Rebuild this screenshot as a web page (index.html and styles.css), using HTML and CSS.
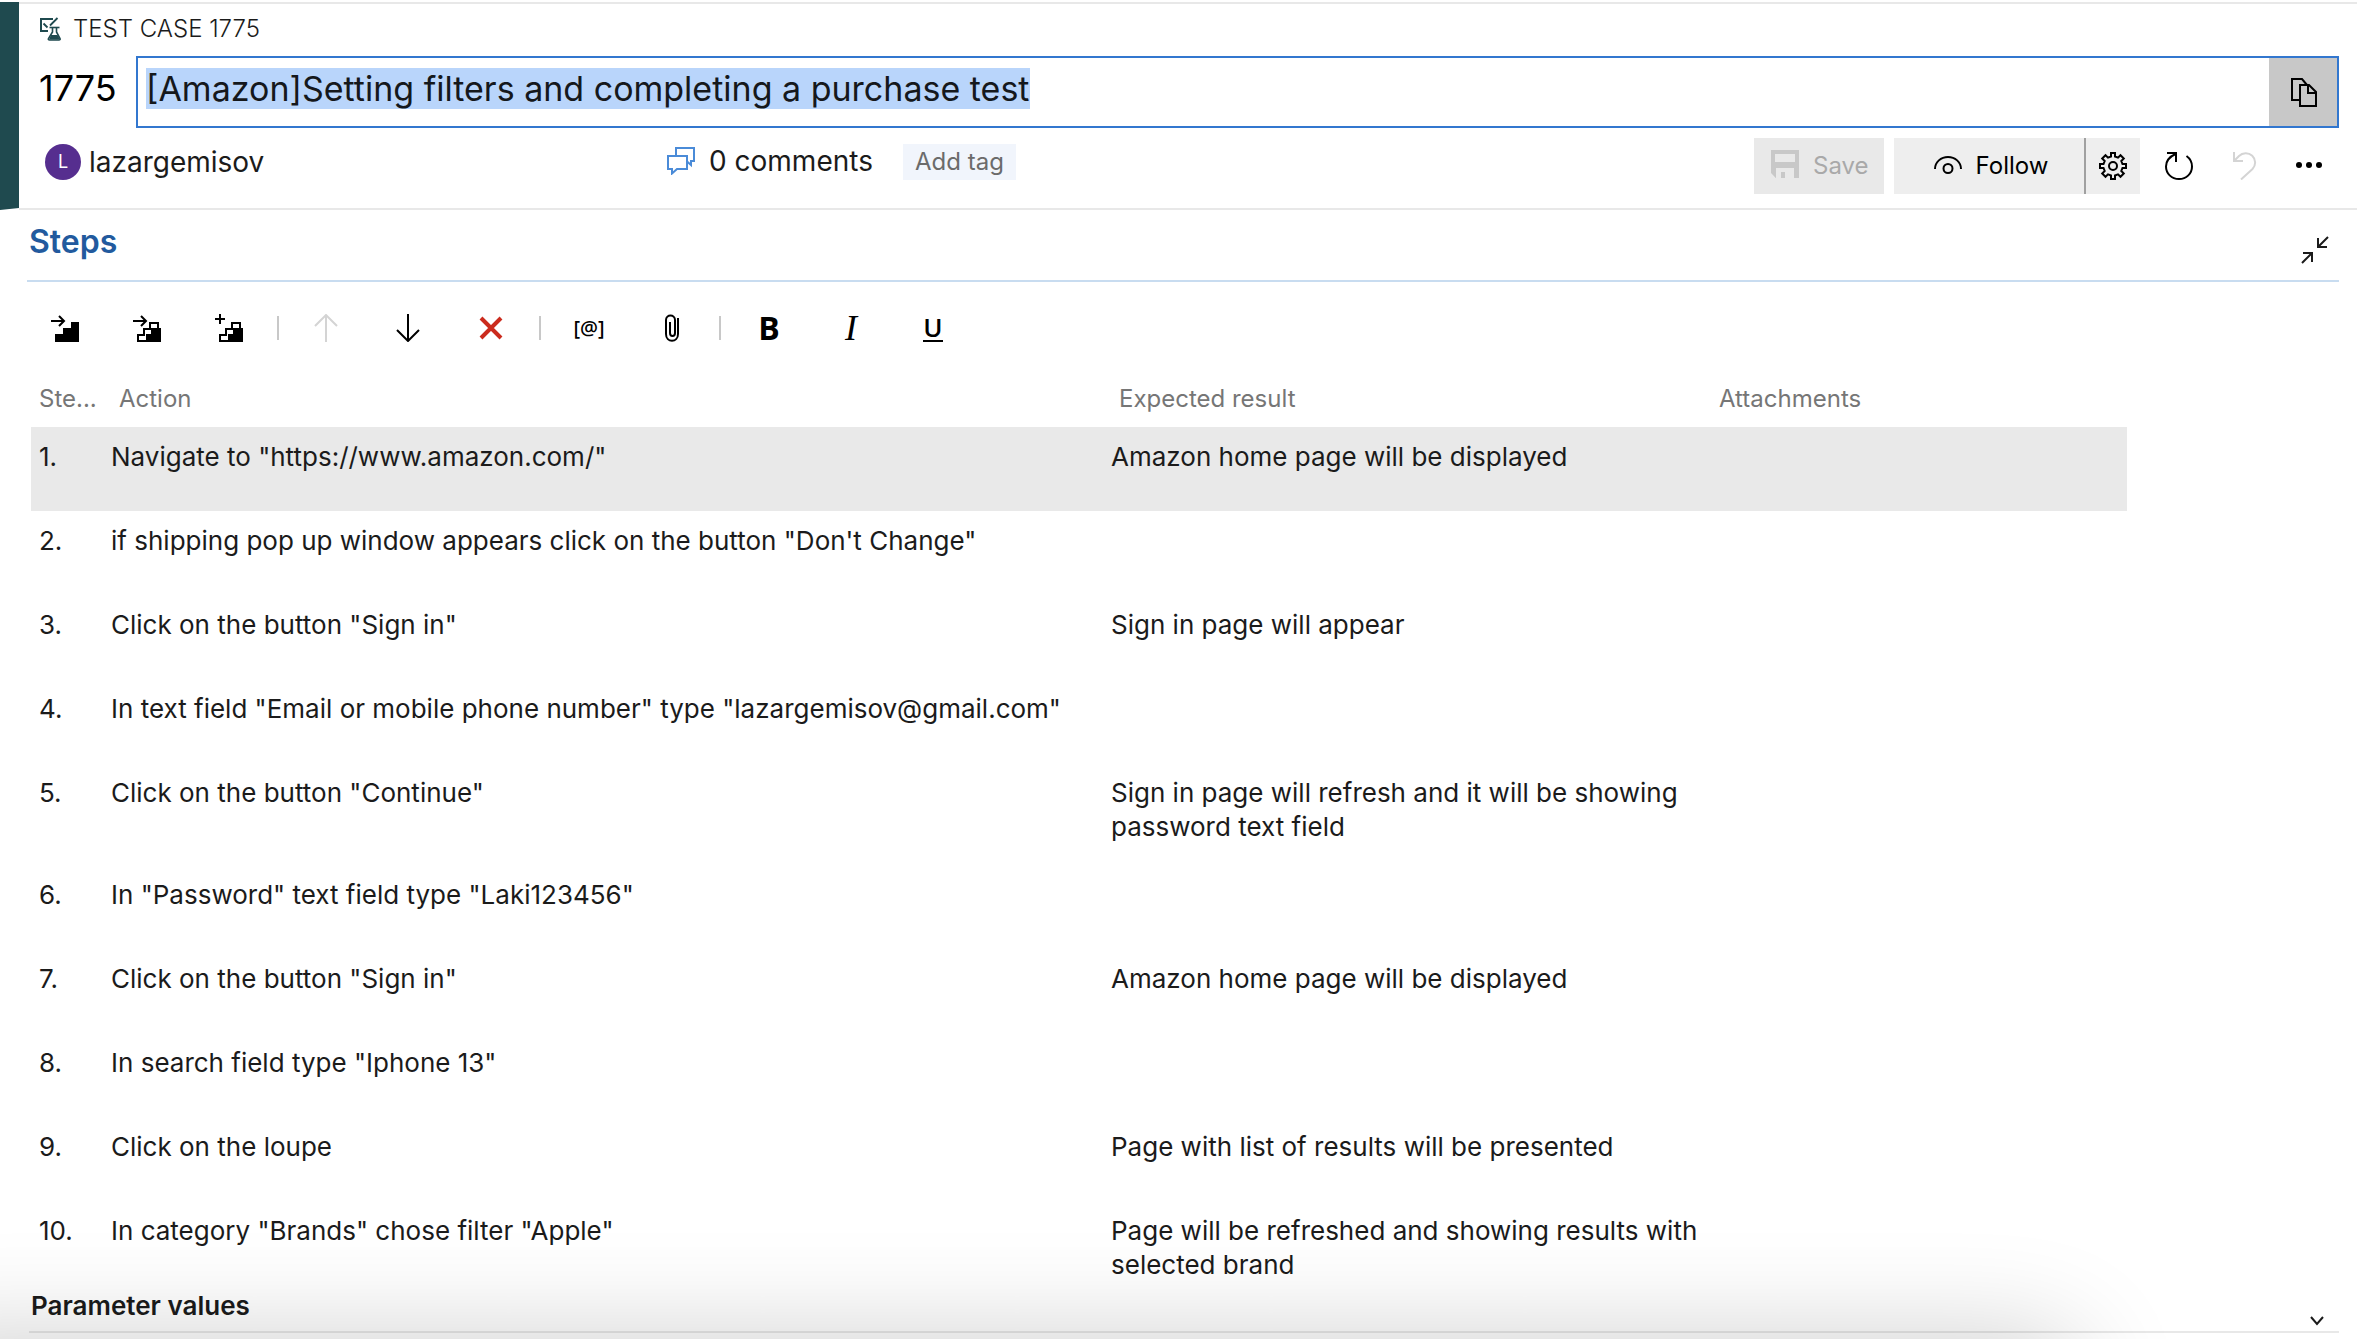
FILE: index.html
```html
<!DOCTYPE html>
<html lang="en">
<head>
<meta charset="utf-8">
<title>Test Case 1775</title>
<link rel="stylesheet" href="styles.css">
</head>
<body>
<header class="item-header">
  <svg class="type-bar" viewBox="0 0 19 208" preserveAspectRatio="none" aria-hidden="true"><path d="M0 0H19V206L0 208Z" fill="#1f4a4f"/></svg>
  <div class="header-body">
    <div class="type-row">
      <svg width="22" height="24" viewBox="0 0 22 24" fill="none" stroke="#1f4a4f" stroke-width="2" aria-hidden="true"><path d="M14 2H2V14H9"/><path d="M4.500 6.500L8.500 10.500M11 8.500L18.500 1" stroke-width="1.800"/><path d="M10.500 10.500H20.500" stroke-width="1.600"/><path d="M13.500 11V15L9.500 21.500Q9 23 10.500 23H20Q21.500 23 21 21.500L17.500 15V11" stroke-width="1.600"/><path d="M12 18H18.500L21 22.500H10Z" fill="#1f4a4f" stroke="none"/></svg>
      <span>TEST CASE 1775</span>
    </div>
    <div class="title-row">
      <label class="item-id" for="title">1775</label>
      <div class="title-box">
        <input id="title" class="title-input" type="text" value="[Amazon]Setting filters and completing a purchase test">
        <button class="copy-button" type="button" aria-label="Copy to clipboard">
          <svg width="28" height="30" viewBox="0 0 28 30" fill="none" stroke="#000" stroke-width="2"><path d="M10 23H2V2H12L17 8"/><path d="M10 8H19L26 15V29H10Z"/><path d="M18 8V16H26"/></svg>
        </button>
      </div>
    </div>
    <div class="meta-row">
      <div class="assignee"><span class="avatar">L</span><span>lazargemisov</span></div>
      <a class="comments" href="#comments">
        <svg width="28" height="28" viewBox="0 0 28 28" fill="none" stroke="#4a8bd8" stroke-width="2" aria-hidden="true"><path d="M9 9V1H27V14H24V18L19.500 14"/><path d="M1 9H20V22H10L5 26.500V22H1Z"/></svg>
        <span>0 comments</span>
      </a>
      <button class="add-tag" type="button">Add tag</button>
      <div class="actions">
        <button class="save" type="button" disabled>
          <svg width="28" height="28" viewBox="0 0 28 28" aria-hidden="true"><path fill="#c8c8c8" fill-rule="evenodd" d="M0 0H28V28H23V18H5V28L0 23ZM4 4V12H24V4Z"/><path fill="#c8c8c8" d="M10 22H14V28H10ZM1 23H5V28Z"/></svg>
          <span>Save</span>
        </button>
        <button class="follow" type="button">
          <svg width="28" height="20" viewBox="0 0 28 20" fill="none" stroke="#000" stroke-width="2" aria-hidden="true"><path d="M1 13C1 6 7 1 14 1S27 6 27 13"/><circle cx="14" cy="12.500" r="4.500"/></svg>
          <span>Follow</span>
        </button>
        <button class="gear" type="button" aria-label="Follow settings">
          <svg width="28" height="28" viewBox="0 0 28 28" fill="none" stroke="#000" stroke-width="2"><path d="M12 1H16V4.500L19 5.700L21.500 3.200L24.800 6.500L22.300 9L23.500 12H27V16H23.500L22.300 19L24.800 21.500L21.500 24.800L19 22.300L16 23.500V27H12V23.500L9 22.300L6.500 24.800L3.200 21.500L5.700 19L4.500 16H1V12H4.500L5.700 9L3.200 6.500L6.500 3.200L9 5.700L12 4.500Z"/><circle cx="14" cy="14" r="4"/></svg>
        </button>
        <button class="bare" type="button" aria-label="Refresh">
          <svg width="28" height="28" viewBox="0 0 28 28" fill="none" stroke="#000" stroke-width="2"><path d="M2 1H11V10"/><path d="M10.500 2C4 5 1 9.500 1 14.500C1 21.500 6.500 27 14 27S27 21.500 27 14.500C27 10 25 6.500 21.500 4"/></svg>
        </button>
        <button class="bare" type="button" aria-label="Undo" disabled>
          <svg width="28" height="28" viewBox="0 0 28 28" fill="none" stroke="#d4d4d4" stroke-width="2"><path d="M4 0V9H13"/><path d="M4 9L9 4A9.300 9.300 0 0 1 22.500 17L11 27.500"/></svg>
        </button>
        <button class="bare" type="button" aria-label="More actions">
          <svg width="28" height="28" viewBox="0 0 28 28"><circle cx="4" cy="13" r="3"/><circle cx="14" cy="13" r="3"/><circle cx="24" cy="13" r="3"/></svg>
        </button>
      </div>
    </div>
  </div>
</header>
<main class="steps">
  <div class="section-head">
    <h2>Steps</h2>
    <button class="collapse" type="button" aria-label="Exit full screen">
      <svg width="28" height="28" viewBox="0 0 28 28" fill="none" stroke="#1b1b1b" stroke-width="2"><path d="M27 1L17 11M17 2V11H26"/><path d="M1 27L11 17M2 17H11V26"/></svg>
    </button>
  </div>
  <div class="toolbar" role="toolbar" aria-label="Step editing">
    <button type="button" aria-label="Insert step"><svg width="28" height="28" viewBox="0 0 28 28"><path d="M4 28V20H12V14H20V8H28V28Z"/><path d="M0 7H13M8 2L13 7L8 12" fill="none" stroke="#000" stroke-width="2"/></svg></button>
    <button type="button" aria-label="Insert shared steps"><svg width="28" height="28" viewBox="0 0 28 28"><path d="M14 28V20H20V14H28V28Z"/><path d="M5 27V21H11V15H17V9H25V15H19V21H14V27ZM0 7H13M8 2L13 7L8 12" fill="none" stroke="#000" stroke-width="2"/></svg></button>
    <button type="button" aria-label="Create shared steps"><svg width="28" height="28" viewBox="0 0 28 28"><path d="M14 28V20H20V14H28V28Z"/><path d="M5 27V21H11V15H17V9H25V15H19V21H14V27ZM0 5H10M5 0V10" fill="none" stroke="#000" stroke-width="2"/></svg></button>
    <span class="separator"></span>
    <button type="button" aria-label="Move up" disabled><svg width="28" height="28" viewBox="0 0 28 28" fill="none" stroke="#d4d4d4" stroke-width="2"><path d="M13 28V1M2 12L13 1L24 12"/></svg></button>
    <button type="button" aria-label="Move down"><svg width="28" height="28" viewBox="0 0 28 28" fill="none" stroke="#000" stroke-width="2"><path d="M13 0V27M2 16L13 27L24 16"/></svg></button>
    <button type="button" aria-label="Delete step"><svg width="28" height="28" viewBox="0 0 28 28" fill="none" stroke="#cb2b1d" stroke-width="4"><path d="M4 4L24 24M24 4L4 24"/></svg></button>
    <span class="separator"></span>
    <button class="glyph-param" type="button" aria-label="Insert parameter">[@]</button>
    <button type="button" aria-label="Add attachment"><svg width="28" height="28" viewBox="0 0 28 28" fill="none" stroke="#000" stroke-width="2"><path d="M21 4V20C21 29 9 29 9 20V6C9 0 18 0 18 6V19C18 23 13 23 13 19V8"/></svg></button>
    <span class="separator"></span>
    <button class="glyph-bold" type="button" aria-label="Bold">B</button>
    <button class="glyph-italic" type="button" aria-label="Italic">I</button>
    <button class="glyph-underline" type="button" aria-label="Underline"><span>U</span></button>
  </div>
  <div class="grid">
    <table>
      <colgroup><col class="col-step"><col class="col-action"><col class="col-result"><col></colgroup>
      <thead><tr><th class="step-head" scope="col">Ste...</th><th scope="col">Action</th><th scope="col">Expected result</th><th scope="col">Attachments</th></tr></thead>
      <tbody>
        <tr class="selected"><td>1.</td><td>Navigate to "https://www.amazon.com/"</td><td>Amazon home page will be displayed</td><td></td></tr>
        <tr><td>2.</td><td>if shipping pop up window appears click on the button "Don't Change"</td><td></td><td></td></tr>
        <tr><td>3.</td><td>Click on the button "Sign in"</td><td>Sign in page will appear</td><td></td></tr>
        <tr><td>4.</td><td>In text field "Email or mobile phone number" type "lazargemisov@gmail.com"</td><td></td><td></td></tr>
        <tr><td>5.</td><td>Click on the button "Continue"</td><td>Sign in page will refresh and it will be showing password text field</td><td></td></tr>
        <tr><td>6.</td><td>In "Password" text field type "Laki123456"</td><td></td><td></td></tr>
        <tr><td>7.</td><td>Click on the button "Sign in"</td><td>Amazon home page will be displayed</td><td></td></tr>
        <tr><td>8.</td><td>In search field type "Iphone 13"</td><td></td><td></td></tr>
        <tr><td>9.</td><td>Click on the loupe</td><td>Page with list of results will be presented</td><td></td></tr>
        <tr><td>10.</td><td>In category "Brands" chose filter "Apple"</td><td>Page will be refreshed and showing results with selected brand</td><td></td></tr>
      </tbody>
    </table>
  </div>
</main>
<section class="parameters">
  <h3>Parameter values</h3>
  <button class="expand" type="button" aria-label="Expand parameter values">
    <svg width="14" height="10" viewBox="0 0 14 10" fill="none" stroke="#1b1b1b" stroke-width="2"><path d="M1 1L7 8L13 1"/></svg>
  </button>
</section>
<div class="bottom-shadow"></div>
<script src="script.js"></script>
</body>
</html>
```
FILE: styles.css
```css
* {
  box-sizing: border-box;
}

body {
  margin: 0;
  padding-top: 2px;
  min-height: 100vh;
  display: flex;
  flex-direction: column;
  position: relative;
  background: #fff;
  color: #1b1b1b;
  font-family: Inter, "Liberation Sans", sans-serif;
  font-size: 26px;
  line-height: 34px;
}

button,
input {
  font: inherit;
  color: inherit;
  margin: 0;
  padding: 0;
  border: 0;
  border-radius: 0;
  background: none;
}

svg {
  display: block;
  flex: none;
}

.item-header {
  display: flex;
  flex: none;
}

.type-bar {
  width: 19px;
  height: 208px;
}

.header-body {
  flex: 1;
  min-width: 0;
  height: 208px;
  padding: 0 18px 0 20px;
  border-top: 2px solid #e8e8e8;
  border-bottom: 2px solid #e8e8e8;
}

.type-row {
  display: flex;
  align-items: center;
  gap: 12px;
  height: 50px;
  margin-bottom: 2px;
  font-size: 24px;
  font-weight: 300;
}

.title-row {
  display: flex;
  align-items: center;
  font-size: 36px;
}

.item-id {
  width: 97px;
  padding-bottom: 8px;
  color: #000;
}

.title-box {
  flex: 1;
  display: flex;
  height: 72px;
  border: 2px solid #3277cf;
}

.title-input {
  flex: 1;
  min-width: 0;
  padding: 0 8px 7px;
  outline: none;
  font-size: 34px;
}

.title-input::selection {
  background: rgba(185, 213, 251, 0.996);
  color: #15181c;
}

.copy-button {
  width: 68px;
  padding-left: 2px;
  display: flex;
  align-items: center;
  justify-content: center;
  background: #c8c8c8;
}

.meta-row {
  display: flex;
  align-items: flex-start;
  padding-top: 16px;
  font-size: 28px;
}

.assignee {
  display: flex;
  align-items: center;
  gap: 8px;
  width: 628px;
  height: 36px;
  padding-left: 6px;
}

.avatar {
  width: 36px;
  height: 36px;
  border-radius: 50%;
  background: #562e8f;
  color: #fff;
  font-size: 18px;
  line-height: 36px;
  text-align: center;
}

.comments {
  display: flex;
  align-items: center;
  gap: 14px;
  width: 236px;
  height: 34px;
  color: #1b1b1b;
  text-decoration: none;
  white-space: nowrap;
}

.add-tag {
  height: 36px;
  padding: 0 12px;
  background: #f1f5fc;
  color: #6b6b6b;
  font-size: 24px;
}

.actions {
  display: flex;
  margin: -6px -2px 0 auto;
  font-size: 24px;
}

.actions button {
  display: flex;
  align-items: center;
  justify-content: center;
  height: 56px;
}

.actions .save {
  width: 130px;
  gap: 14px;
  justify-content: flex-start;
  padding: 0 0 4px 17px;
  margin-right: 10px;
  background: #e9e9e9;
  color: #a9a9a9;
}

.save span {
  padding-top: 4px;
}

.actions .follow {
  width: 190px;
  gap: 14px;
  padding-left: 4px;
  background: #eee;
  color: #000;
}

.actions .gear {
  width: 56px;
  margin-right: 6px;
  border-left: 2px solid #a0a0a0;
  background: #eee;
}

.actions .bare {
  width: 65px;
}

.steps {
  flex: 1;
  display: flex;
  flex-direction: column;
  padding: 0 18px 0 27px;
}

.section-head {
  display: flex;
  justify-content: space-between;
  align-items: center;
  height: 72px;
  flex: none;
  padding: 0 10px 6px 2px;
  border-bottom: 2px solid #c8dcf0;
}

.section-head h2 {
  margin: 0;
  color: #225a9e;
  font-size: 32px;
  font-weight: 600;
}

.collapse {
  padding-top: 16px;
}

.toolbar {
  display: flex;
  flex: none;
  align-items: center;
  height: 92px;
  margin-left: -3px;
}

.toolbar button {
  display: flex;
  align-items: center;
  justify-content: center;
  width: 82px;
  height: 46px;
  color: #000;
}

.separator {
  width: 2px;
  height: 24px;
  margin: 0 7px;
  background: #c8c8c8;
}

.toolbar .glyph-param {
  font-family: "Noto Sans", sans-serif;
  font-size: 20px;
  font-weight: 500;
}

.toolbar .glyph-bold {
  font-family: "Open Sans", sans-serif;
  font-size: 32px;
  font-weight: 700;
}

.toolbar .glyph-italic {
  font-family: "Liberation Serif", serif;
  font-size: 36px;
  font-style: italic;
}

.toolbar .glyph-underline {
  font-family: "Open Sans", sans-serif;
  font-size: 26px;
  font-weight: 600;
}

.glyph-underline span {
  line-height: 26px;
  border-bottom: 2px solid #000;
}

/* The last row runs a little way under the parameters heading. */
.grid {
  flex: 1;
  padding-left: 4px;
  margin-bottom: -16px;
}

table {
  width: calc(100% - 212px);
  table-layout: fixed;
  border-collapse: collapse;
}

.col-step {
  width: 71px;
}

.col-action {
  width: 1000px;
}

.col-result {
  width: 600px;
}

th {
  height: 53px;
  padding: 0 9px 4px 17px;
  color: #767676;
  font-size: 24px;
  font-weight: 400;
  text-align: left;
}

.step-head {
  padding: 0 0 4px 8px;
  white-space: nowrap;
}

td {
  height: 84px;
  padding: 13px 0 21px 9px;
  vertical-align: top;
}

td:first-child {
  padding-left: 8px;
}

.selected {
  background: #e9e9e9;
}

.parameters {
  display: flex;
  flex: none;
  justify-content: space-between;
  height: 44px;
  margin: 0 18px 6px 29px;
  padding: 0 15px 0 2px;
  border-bottom: 2px solid #e8e8e8;
}

.parameters h3 {
  margin: 0;
  font-size: 26px;
  font-weight: 600;
}

.expand {
  align-self: flex-end;
  padding-bottom: 5px;
}

/* Soft shade rising from the bottom edge, clipped to the page. */
.bottom-shadow {
  position: absolute;
  inset: 0;
  overflow: hidden;
  pointer-events: none;
}

.bottom-shadow::before {
  content: "";
  position: absolute;
  top: 100%;
  left: -100px;
  right: 12%;
  height: 200px;
  border-radius: 20px;
  box-shadow: 0 0 110px rgba(0, 0, 0, 0.2);
}
```
FILE: script.js
```js
const title = document.getElementById("title");
title.focus();
title.select();
```
